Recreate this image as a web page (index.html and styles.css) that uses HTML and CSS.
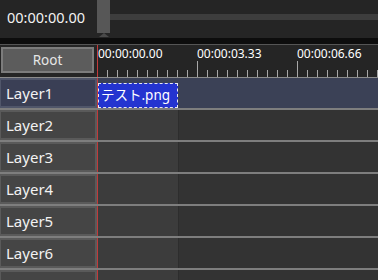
FILE: index.html
```html
<!DOCTYPE html>
<html lang="ja">
<head>
    <meta charset="UTF-8">
    <meta name="viewport" content="width=device-width, initial-scale=1.0">
    <title>Timeline</title>
    <link rel="stylesheet" href="styles.css">
</head>
<body>
    <div class="top">
        <div class="time">00:00:00.00</div>
        <div class="slider">
            <div class="thumb">
                <div class="thumb-body"></div>
                <div class="thumb-tip"></div>
            </div>
            <div class="track"></div>
        </div>
    </div>
    <div class="band"></div>
    <div class="header">
        <div class="root-cell"><div class="root-btn">Root</div></div>
        <div class="ruler">
            <span class="mark" style="left: 0px">00:00:00.00</span>
            <span class="mark" style="left: 99px">00:00:03.33</span>
            <span class="mark" style="left: 199px">00:00:06.66</span>
            <span class="major" style="left: 99px"></span>
            <span class="major" style="left: 199px"></span>
            <div class="ticks"></div>
        </div>
    </div>
    <div class="rows">
        <div class="row selected">
            <div class="label">Layer1</div>
            <div class="lane"><div class="clip">テスト.png</div></div>
        </div>
        <div class="row"><div class="label">Layer2</div><div class="lane"></div></div>
        <div class="row"><div class="label">Layer3</div><div class="lane"></div></div>
        <div class="row"><div class="label">Layer4</div><div class="lane"></div></div>
        <div class="row"><div class="label">Layer5</div><div class="lane"></div></div>
        <div class="row"><div class="label">Layer6</div><div class="lane"></div></div>
        <div class="row"><div class="label"></div><div class="lane"></div></div>
    </div>
</body>
</html>
```

FILE: styles.css
```css
body {
    margin: 0;
    width: 378px;
    height: 280px;
    overflow: hidden;
    background: #333;
    font-family: "Noto Sans", "Noto Sans CJK JP", sans-serif;
    color: #f2f2f2;
}

.top {
    display: flex;
    height: 38px;
    background: #252525;
}

.time {
    width: 97px;
    padding-left: 7px;
    box-sizing: border-box;
    font-size: 14.5px;
    line-height: 34px;
}

.slider {
    flex: 1;
    display: flex;
}

.thumb {
    display: flex;
    flex-direction: column;
    align-items: center;
    width: 13px;
}

.thumb-body {
    width: 13px;
    height: 33px;
    background: #575757;
}

.thumb-tip {
    width: 0;
    height: 0;
    border-left: 5px solid transparent;
    border-right: 5px solid transparent;
    border-bottom: 4px solid #4a4a4a;
}

.track {
    flex: 1;
    height: 6px;
    margin-top: 14px;
    background: #3d3d3d;
}

.band {
    height: 6px;
    background: #0d0d0d;
    border-bottom: 1px solid #555;
}

.header {
    display: flex;
    height: 32px;
    background: #252525;
    border-bottom: 1px solid #8c8c8c;
}

.root-cell {
    width: 97px;
    padding: 2px 3px 4px 1px;
    box-sizing: border-box;
}

.root-btn {
    height: 100%;
    box-sizing: border-box;
    border: 2px solid #7c7c7c;
    background: #5c5c5c;
    color: #e6e6e6;
    font-size: 13.5px;
    line-height: 22px;
    text-align: center;
}

.ruler {
    flex: 1;
    position: relative;
    border-left: 1px solid #c23a3a;
}

.mark {
    position: absolute;
    top: 0;
    font-size: 12px;
    line-height: 18px;
    color: #fff;
}

.major {
    position: absolute;
    bottom: 0;
    width: 1px;
    height: 16px;
    background: #a8a8a8;
}

.ticks {
    position: absolute;
    left: 0;
    right: 0;
    bottom: 0;
    height: 7px;
    background: repeating-linear-gradient(to right, transparent 0 9px, #a8a8a8 9px 10px);
}

.row {
    display: flex;
    height: 30px;
    border-bottom: 2px solid #7e7e7e;
}

.label {
    width: 97px;
    box-sizing: border-box;
    border: 2px solid #5a5a5a;
    border-left-width: 1px;
    background: #454545;
    padding-left: 5px;
    font-size: 15px;
    line-height: 26px;
}

.lane {
    flex: 1;
    border-left: 1px solid #c23a3a;
    background: linear-gradient(to right, #3c3c3c 0 80px, #2d2d2d 80px 81px, #333 81px);
}

.selected .label {
    background: #3a3f55;
    border-color: #50566a;
}

.selected .lane {
    background: #3b4156;
    padding-top: 5px;
}

.clip {
    width: 80px;
    height: 25px;
    box-sizing: border-box;
    border: 1px dashed #e8e8f0;
    background: #2434d0;
    padding-left: 2px;
    font-size: 13.5px;
    line-height: 22px;
    color: #fff;
}
```
